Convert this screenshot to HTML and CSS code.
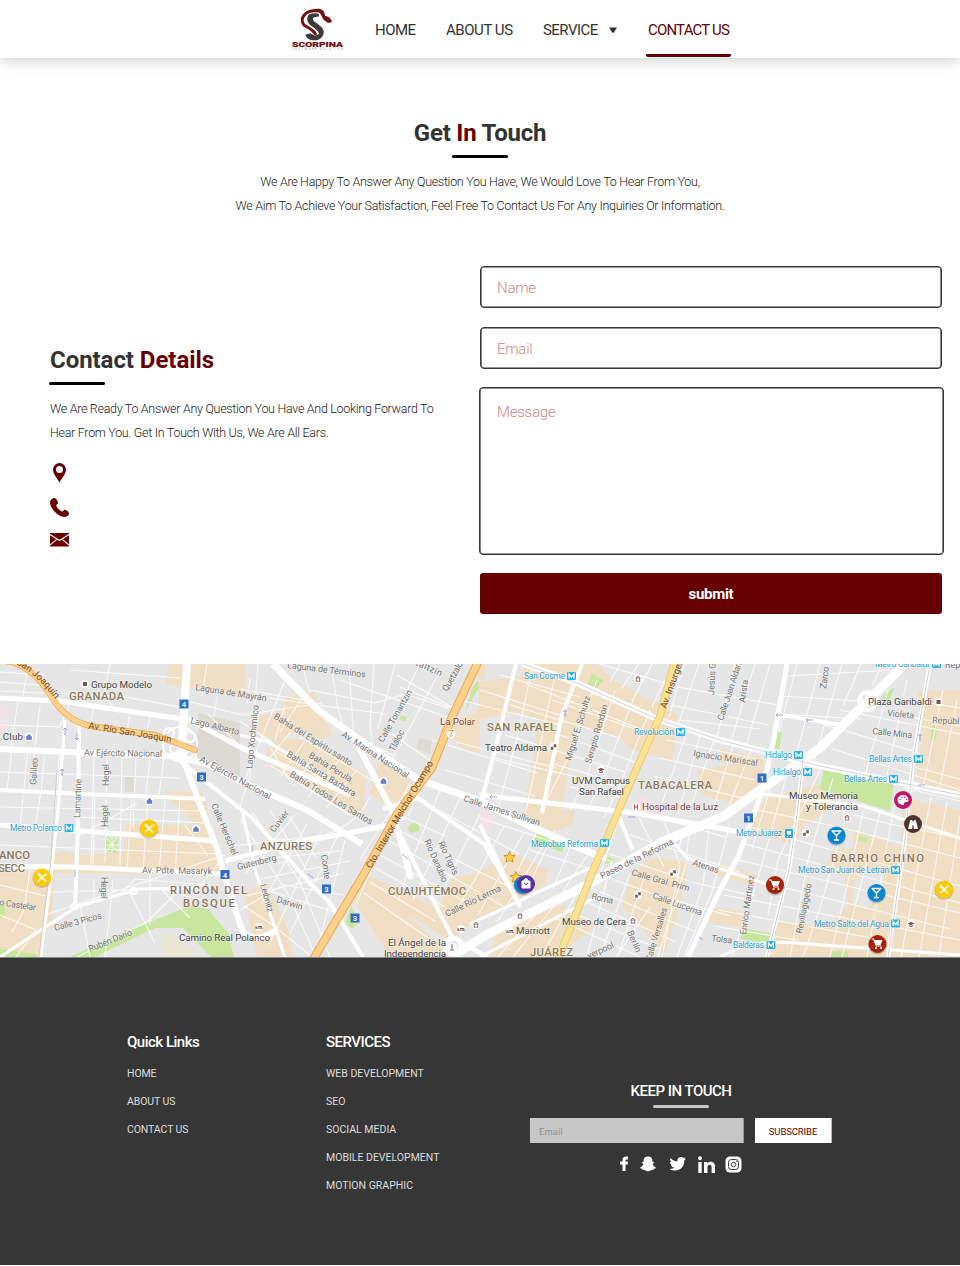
FILE: index.html
```html
<!DOCTYPE html>
<html lang="en">
<head>
<meta charset="utf-8">
<title>Scorpina - Contact Us</title>
<link rel="stylesheet" href="styles.css">
</head>
<body>
<header class="header">
  <svg class="logo" viewBox="0 0 54 44">
    <path d="M28 7C18 6 17 13 22 17c6 4 10 7 7 11-3 4-11 3-12-1" fill="none" stroke="#3b3b3b" stroke-width="5.500"/>
    <path d="M29 4.500C15 1 8 12 14 18c4 3 9 4 12 10" fill="none" stroke="#fff" stroke-width="5"/>
    <path d="M27 4C14 2 8 12 13 18c4 3 9 4 12 10" fill="none" stroke="#741012" stroke-width="3"/>
    <path d="M21 3c7-3 13-1 13 6 3 0 6 2 7 6l-4 1-4-3c-3-3-2-8-8-8z" fill="#741012"/>
    <text x="1" y="39.500" class="logo-name" textLength="51" lengthAdjust="spacingAndGlyphs">SCORPINA</text>
    <text x="1" y="43" class="logo-tag" textLength="51">SOFTWARE SOLUTION</text>
  </svg>
  <nav class="nav">
    <a class="nav-home">HOME</a>
    <a class="nav-about">ABOUT US</a>
    <a class="nav-service">SERVICE <svg class="caret" viewBox="0 0 8 6"><path d="M0 .4h8L5 5.3q-1 1-2 0z" fill="#333"/></svg></a>
    <a class="nav-contact">CONTACT US</a>
  </nav>
</header>

<main>
  <section class="intro">
    <h1 class="title">Get <span class="accent">In</span> Touch</h1>
    <div class="rule"></div>
    <p class="copy intro-one">We Are Happy To Answer Any Question You Have, We Would Love To Hear From You,</p>
    <p class="copy intro-two">We Aim To Achieve Your Satisfaction, Feel Free To Contact Us For Any Inquiries Or Information.</p>
  </section>

  <section class="contact">
    <div class="details">
      <h2 class="title">Contact <span class="accent">Details</span></h2>
      <div class="rule"></div>
      <p class="copy detail-one">We Are Ready To Answer Any Question You Have And Looking Forward To</p>
      <p class="copy detail-two">Hear From You. Get In Touch With Us, We Are All Ears.</p>
      <div class="detail-icons">
        <svg width="20" height="20" viewBox="0 0 20 20"><path fill-rule="evenodd" d="M9.5 0a6.5 6.5 0 0 0-6.5 6.5C3 11 7 15 9.4 19.5 12 15 16 11 16 6.5A6.5 6.5 0 0 0 9.500 0zm0 3a3.500 3.500 0 1 1 0 7 3.500 3.500 0 0 1 0-7z"/></svg>
        <svg width="20" height="20" viewBox="0 0 20 20"><path d="M4.500 0C6 0 8.500 4 8 5.200 7.500 6.500 6 6.500 6.300 7.500c.7 2.500 3.400 5 5.700 6 1 .4 1-1.500 2.600-1.800C16 11.500 19 14 19 15.500c0 1-1.500 3.500-4.200 3.500C8.500 19 0 10.500 0 4.500 0 1.500 3 0 4.500 0z"/></svg>
        <svg width="20" height="20" viewBox="0 3 20 20"><path d="M0 3h19v13.500H0z"/><path d="M0 4.500l7 4.500q2.500 2.400 5 0l7-4.500M0 15.200l6.500-5.500M19 15.200l-6.500-5.500" fill="none" stroke="#fff" stroke-width="1.100"/></svg>
      </div>
    </div>
    <form class="form">
      <input class="field" type="text" placeholder="Name">
      <input class="field" type="text" placeholder="Email">
      <textarea class="field message" placeholder="Message"></textarea>
      <button class="submit" type="button">submit</button>
    </form>
  </section>

  <svg class="map" viewBox="0 664 960 293">
    <defs>
      <g id="metro"><rect width="9" height="8" rx="1" fill="#27b0e6"/><path d="M2 6.500V2l2.500 3L7 2v4.500" fill="none" stroke="#fff" stroke-width="1.300"/></g>
      <g id="fork"><circle cy="1" r="9.500" fill="#000" opacity=".18"/><circle r="9" fill="#fccb05"/><path d="M-4 4L3-3M4 4L-3-3" stroke="#fff" stroke-width="1.500"/><path d="M-4.500-3.500l1.500-1 2 2.500-1 1zM2-2l2.500-2.500M3-1l2-2.500" stroke="#fff" stroke-width=".8" fill="#fff"/></g>
      <g id="glass"><circle cy="1" r="9.500" fill="#000" opacity=".18"/><circle r="9" fill="#0b86d0"/><path d="M-5-4.500H5M-4-4L0 0 4-4M0 0v4.500M-2.500 4.500h5" stroke="#fff" stroke-width="1.300" fill="none"/></g>
      <g id="cart"><circle cy="1" r="9.500" fill="#000" opacity=".18"/><circle r="9" fill="#a72208"/><path d="M-6-5h2l3 7h5" fill="none" stroke="#fff" stroke-width="1.200"/><path d="M-3.500-4h8.500L3 1h-5z" fill="#fff"/><circle cx="-1.500" cy="4" r="1.100" fill="#fff"/><circle cx="3.500" cy="4" r="1.100" fill="#fff"/></g>
      <g id="shop"><circle r="4" fill="#fff"/><path d="M-2.500-.5h5v3h-5zM-1.500-.5v-1q1.500-2 3 0v1" fill="#7078c8" stroke="#7078c8" stroke-width=".6"/></g>
      <g id="poi"><circle r="4.300" fill="#fff"/><path d="M-2.500-1h5M-2 2.200h4.200M-1.700-1v3M1.700-1v3M-2-1.500l2-1.200 2 1.200" stroke="#805752" stroke-width=".8" fill="none"/></g>
      <g id="grad"><circle r="4.300" fill="#fff"/><path d="M-3.500-.5L0-2.300 3.500-.5 0 1.300zM-2 1v1.300q2 1.200 4 0V1L0 2z" fill="#805752"/></g>
      <g id="bed"><circle r="4" fill="#fff"/><path d="M-3-1v3M-3 1h6v1M-1-.5h4v1" stroke="#805752" fill="none"/></g>
      <g id="mask"><circle r="4.300" fill="#fff"/><path d="M-2.500 0h2v2.500h-2zM.5-2.500h2V0h-2z" fill="#805752" stroke="#805752" stroke-width=".6"/></g>
      <g id="shield"><rect x="-4.500" y="-4.500" width="9" height="9" fill="#2e6ec9"/></g>
      <path id="star" d="M0-5.500l1.700 3.600 3.900.5-2.900 2.700.8 3.900L0 3.300l-3.500 1.900.8-3.900-2.900-2.700 3.900-.5z" fill="#ffcf40" stroke="#b98a25" stroke-width=".8"/>
      <path id="joaquin" d="M-5 659Q27 660 58 703"/>
    </defs>
    <rect y="664" width="960" height="293" fill="#e6e6e6"/>

    <!-- commercial blocks -->
    <g fill="#f1dfc5">
      <path d="M169 664h76v35l-42-12-15 2-22-5z"/><path d="M165 792h38l20 76 2 6-175-1V856l13-5 15 4 45-3 4-28 70 1-21-20z"/>
      <path d="M0 870l55 3-3 45-14 39H0z"/><path d="M286 697l27-5 9 25 11 18-15 6-20-12-22 12-19-10 3-15 22-6z"/>
      <path d="M266 755l8-18 32 3 60 34-3 43-25-11-71-42z"/><path d="M378 761l16 6 17 8-5 14 9 13-11 14-34-22z"/>
      <path d="M525 664h72l16 16 65 34-6 47-42-12-10-12-45-11-13 84h-38l15-90-20-8-40 8V682l43-6z"/>
      <path d="M452 735l3-14 25-12v44l-18-3zM477 664h8v15h-8z"/><path d="M697 770l48-7 20 5-3 31-30 4-30-8z"/>
      <path d="M720 749l44 9-2 10-42-6zM917 690h43v104l-45-13 7-45z"/><path d="M765 798l60-15 8 25-27 16-13 20-44-12z"/>
      <path d="M903 798l57 12v147H769l9-36 50 6 20-22-3-27-19-13 16-39 59 21z"/>
      <path d="M480 872l33-20 35 18-2 14-29 17-37 16-30 24-40-25-30 10-18-19-10-20 11-14 75 35 15-30z"/>
      <path d="M352 899l50 10 50 48h-62zM244 893l22-10 22 47 5 27h-36z"/><path d="M500 923l52-22 45 24-40 32h-68z"/>
      <path d="M632 872l18-15 38 5-9 48-16 47-17-25-24-25z"/><path d="M705 907l37 4 4 17-36-5zM526 810h48v14l-20 8-28-13zM720 864l40 12-3 11-41-12z"/>
    </g>
    <path d="M854 882l13-12 18 4-4 22-14 12-14-4zM832 826l20 4 2 18-26 2z" fill="#e6e6e6"/>
    <path d="M0 705h8v29H0zM480 807l16 12-4 11-12-4zM635 801l8-5 9 4-4 13-12-2z" fill="#f5e1e6"/>
    <path d="M197 713l43 10v62l-20-14-28-17 8-30zM125 777h9v15h-9zM419 738l13 3-2 13-14-6z" fill="#dcdad3"/>
    <path d="M175 936q-16-9-12 21h38z" fill="#ece6d7"/>

    <!-- parks -->
    <g fill="#c8e69e">
      <path d="M824 767l70 14-4 30-70-22zM774 730l8 3-3 17-9-3zM885 693l9-5-5 13h-8zM932 725l5 2-2 14-4-1z"/>
      <path d="M70 957l50-23 70-28 18 3 20 24 6 24h-23l-28-29h-28L95 957zM106 837l12 1-1 15-12-1zM0 905h5v11l-5 2zM0 949l37 5v3H0z"/>
      <path d="M538 829l28 12-4 11-28-10zM602 854l14 6-10 4-6-4zM592 674l12 6-7 8-9-4zM401 715l6 2-1 4-7-1zM478 680l1 8-14 23 8-25zM408 828q6-9 11-2v5l-9 2zM351 906l7 16-5 7-8-5z"/>
      <path d="M745 928l26 6-3 9-28-4zM831 951h17v6h-17zM859 836l9 2-1 4-9-2z"/>
    </g>

    <!-- side streets -->
    <g class="side">
      <path d="M0 672l45 3M0 682l52 4M0 691l120 5 65 12M70 670l110 8M110 664l-6 31 12 16M28 664l-5 32M18 700l-7 48M40 705l-5 43-6 43M0 725l60 2M70 704l-10 22M94 706l-4 20M130 714l-3 17M150 717l-3 15"/>
      <path d="M12 750l-5 40M28 750l-4 38-4 39M45 751l-4 40-6 37M60 751l-7 75M94 755l-3 109M107 755l-2 108M122 755l-2 110M136 756l-3 72M150 757l-4 37M164 757l-5 38M0 772l180 6M0 807l206 4M78 817l130 6M0 845l220 9M95 798l-2 67M132 797l-5 72M148 797l-5 75M165 798l-6 75M180 798l-5 76M137 803l-60 34"/>
      <path d="M207 664l-5 32M218 690l-4 27M187 701l55 14 80-12M240 689l75 13M208 714l35 35M258 664l-8 112-11 34M250 678l-3 25M286 678l-43 106M268 743l22 38M240 721l50 34 40 32M270 698l46 7 40 5 30 4M302 664l8 30M331 664l7 45 9 30M349 664l5 78M374 664l-4 60 4 35M395 664l-17 65M420 664l-35 71M440 671l-40 75-12 19M310 690l65 13 30-9 43 14M340 680l110 38M386 730l48 33M397 675l60 35M400 687l52 21M370 744l25 12"/>
      <path d="M290 733l-23 28M306 739l-25 37M322 748l-29 38M340 759l-32 38M357 770l-31 38M275 751l85 49M270 765l80 50M300 737l73 44M285 705l-10 35M302 698l-22 34"/>
      <path d="M390 812l-30 47M410 784l-17 28 52 24M420 788l-12 28M440 790l-30 75-12 36M460 798l-47 102M480 814l-35 72M504 826l-30 55-18 29M523 834l-45 81M543 845l-45 76M405 792l50 27 64 35M394 828l125 64M388 840l115 66M380 855l90 49M375 868l70 39M370 882l65 39M364 893l64 45M432 740l105 33M445 770l90 26M480 690l80 25M460 700l100 25M456 742l100 26M500 675l80 22M526 684l125 49M510 705l110 33M505 735l120 37M495 758l120 28"/>
      <path d="M597 680l-25 70-30 60M615 690l-28 87-17 33M633 700l-32 84-15 28M650 710l-28 70-18 38M533 664l-15 70-20 74M556 671l-30 139M552 700l100 35M560 735l80 29M550 763l77 22M570 787l50 10M480 818l70 23 60 20M540 826l-25 50M555 830l-25 53M573 840l-20 49M591 850l-28 41M530 850l67 21"/>
      <path d="M600 664l75 22M620 664l-10 18M639 664l-18 25M652 664l-20 37M665 680l-13 27M684 664l-15 53M699 664l-23 67M735 664l-20 81M755 664l-25 80M770 664l-24 82M678 687l100 18M671 705l98 20M681 720l80 9M667 740l90 19M660 758l95 22M653 776l97 24M687 732l-27 77M700 735l-22 80M714 740l-24 69M733 745l-22 71M751 750l-25 64"/>
      <path d="M785 676l110-6M782 696l91 6M781 714l80 5M797 664l-18 68M820 664l-25 97M842 664l-28 97M861 664l-18 42M882 664l-10 22M888 690l-23 86M907 680l-20 95M825 725l95 28M840 710l120 24M830 748l130 42M912 700l48 8M905 716l55 10M943 690l-20 98M957 700l-18 91M903 764l57 15"/>
      <path d="M771 785l-19 64M786 778l-28 100-26 79M820 770l-42 90-10 56M833 778l-25 82-18 97M848 810l-27 95-18 52M863 812l-15 70-18 75M880 813l-22 82-16 62M894 806l-27 151M931 797l-30 160M947 802l-28 155M960 816l-21 141M758 810l85 18 117 30M750 827l210 59M742 843l218 60M735 859l225 54M730 874l220 55M724 895l236 45M718 910l165 30M713 926l85 14M904 788l56 13M770 793l120 31 70 14"/>
      <path d="M619 818l-21 62M636 812l28 55M660 810l20 55-18 92M690 820l-4 44-28 93M710 820l-7 66-26 71M730 823l-18 69-28 65M610 854l85 29 60 13M601 875l55 20 75 21M591 888l105 44M580 899l96 43M565 910l95 39M555 918l85 39M612 860l-25 97M630 873l-30 84M646 872l-28 84M650 907l-34 50M581 886l-40 71M562 896l-49 61M542 907l-44 50M650 815l75 22M630 835l110 37"/>
      <path d="M45 915l180-60M0 915l36 15-20 27M50 892l110-3 60 16M76 906l42-10 17-17 75 6M80 905l10 52M94 880v20M113 880l-8 77M130 893l25 50M160 888l30 30M30 870l-6 40-12 22M0 885l50 12M150 875v50M185 884l-38 38-70 35M225 855l-35 44M185 825l23 31"/>
      <path d="M240 819l48 75 28 63M252 812l48 70 30 75M270 810l36 59M289 816l27 42M232 846l95-11M241 861l100-10M260 879l90-18M245 896l100-23M244 906l30 20 38 31M338 835l-48 98M322 830l-53 115M307 824l-45 79M295 815l-50 59M273 892l67 22M345 840l-25 100M240 910l43-25 60 10M372 868l-16 36"/>
      <path d="M286 840a18 12 0 1 0 4 20M370 797a70 65 0 0 1-60 40M210 730c15 10 22 16 30 18M107 838l10 13M117 838l-11 14M112 837v16M106 845h12"/>
    </g>

    <!-- avenues -->
    <g class="road">
      <path d="M187 664l-6 94" stroke-width="8"/><path d="M0 698l60 3 53 8 77 11 50 27 110 48" stroke-width="5"/>
      <path d="M0 749l90 4 84 3 34 8 32 17 67 29 55 34" stroke-width="6"/><path d="M0 790l84 4 121 5" stroke-width="4"/>
      <path d="M180 750l20 55 15 38 15 50 12 37q8 15 35 0" stroke-width="6"/><path d="M0 866l75 1 147 7M225 861l70-18 95-18 14-8" stroke-width="5"/>
      <path d="M0 825l70 5 145 11" stroke-width="5"/><path d="M79 726l-1 100-3 80" stroke-width="4"/><path d="M65 720l-6 80-7 66-11 91" stroke-width="3"/>
      <path d="M273 664l45 46 35 25 64 44 63 22 56 28 70 30" stroke-width="7"/><path d="M354 738l38 72 19 69" stroke-width="6"/>
      <path d="M395 825l57 112 35 20M383 809l35-11 66 46 36 61" stroke-width="4"/><path d="M180 761l72 57 58 65 20 20 33 54" stroke-width="4"/>
      <path d="M240 735l28 7 80 48M0 957l76-50 63-18 57-1M242 810l13 60 30 87" stroke-width="3"/>
      <path d="M523 664l54 19 80 36 63 21 100 26 140 29" stroke-width="6"/>
      <path d="M455 954l33-20 99-49 77-44 60-25 39-28 57-40 91-90" stroke-width="9"/><path d="M470 924l120-56M480 957l120-62" stroke-width="3"/>
      <path d="M516 664l-22 90-14 52M582 664l-20 51-20 98" stroke-width="4"/><path d="M787 664l-14 80-12 51-23 62-18 33-32 67M480 795l155 18 110 20" stroke-width="5"/>
      <path d="M803 760l-6 55-8 55-22 87M930 664l-17 96-8 80-17 117M775 714l66 11" stroke-width="4"/>
      <path d="M720 957q30-18 75-14l165 12M763 794l100 12 97 32M675 844l12 14 80 26" stroke-width="3"/>
      <path d="M480 825l40 82M618 815l15 35" stroke-width="4"/>
      <circle cx="180" cy="744" r="17"/><circle cx="169" cy="733" r="5"/><circle cx="190" cy="737" r="5"/><circle cx="174" cy="749" r="4"/><circle cx="191" cy="755" r="5"/>
      <circle cx="868" cy="701" r="9" stroke-width="4"/><circle cx="676" cy="841" r="5"/><circle cx="453" cy="946" r="8" fill="#e6e6e6" stroke-width="5"/><circle cx="75" cy="906" r="3"/><circle cx="134" cy="891" r="3"/>
    </g>
    <path d="M523 664l54 19 80 36 63 21 100 26 140 29M803 760l-6 55-8 55-22 87M930 664l-17 96-8 80-17 117M57 770l-6 90-12 97" fill="none" stroke="#c6c7ca" stroke-width=".8"/>
    <path d="M65 735v-7M63 730l2-2 2 2M77 733v7M75 738l2 2 2-2M62 776v-7M60 771l2-2 2 2M75 870v7M565 717v-7M563 712l2-2 2 2M490 797h7M492 795l-2 2 2 2M776 715h7M778 713l-2 2 2 2M806 720h7M808 718l-2 2 2 2M920 741v-7M918 736l2-2 2 2M918 785h7M628 817h7M699 937l4 3M402 854l6 5M308 874l5 4M252 852v-6" fill="none" stroke="#8b92ce" stroke-width=".8"/>

    <g fill="none" stroke-linecap="round"><path d="M-4 661Q27 658 51 696 65 720 90 726L155 735 195 750" stroke="#eaa94e" stroke-width="6"/><path d="M-4 661Q27 658 51 696 65 720 90 726L155 735 195 750" stroke="#fdd18a" stroke-width="4.500"/>
      <path d="M479 660l-27 57-20 51-35 46-33 60-53 89" stroke="#eaa94e" stroke-width="8.500"/><path d="M479 660l-27 57-20 51-35 46-33 60-53 89" stroke="#fdd18a" stroke-width="6.500"/>
      <path d="M675 660l-15 56-28 63-37 87-39 98" stroke="#e6c665" stroke-width="7.500"/><path d="M675 660l-15 56-28 63-37 87-39 98" stroke="#fbe192" stroke-width="6"/></g>

    <g class="street">
      <text transform="translate(195 690) rotate(9)" textLength="72">Laguna de Mayrán</text>
      <text transform="translate(190 723) rotate(14)" textLength="50">Lago Alberto</text>
      <text transform="translate(84 755.500) rotate(1)" textLength="78">Av Ejército Nacional</text>
      <text transform="translate(199 761) rotate(29)" textLength="80">Av Ejército Nacional</text>
      <text transform="translate(36 785) rotate(-86)" textLength="27">Galileo</text>
      <text transform="translate(109 786) rotate(-90)" textLength="22">Hegel</text>
      <text transform="translate(108 827) rotate(-90)" textLength="22">Hegel</text>
      <text transform="translate(101 877) rotate(90)" textLength="22">Hegel</text>
      <text transform="translate(80 818) rotate(-88)" textLength="39">Lamartine</text>
      <text transform="translate(252 769) rotate(-84)" textLength="64">Lago Xochimilco</text>
      <text transform="translate(287 668) rotate(7)" textLength="79">Laguna de Términos</text>
      <text transform="translate(273 718) rotate(32)" textLength="91">Bahía del Espíritu santo</text>
      <text transform="translate(308 757) rotate(31)" textLength="49">Bahía Perula</text>
      <text transform="translate(286 756) rotate(31)" textLength="79">Bahía Santa Barbara</text>
      <text transform="translate(289 776) rotate(31)" textLength="95">Bahía Todos Los Santos</text>
      <text transform="translate(341 736) rotate(33)" textLength="78">Av. Marina Nacional</text>
      <text transform="translate(383 743) rotate(-60)" textLength="59">Calle Tonantzin</text>
      <text transform="translate(394 752) rotate(-62)" textLength="23">Tlaloc</text>
      <text transform="translate(415 665) rotate(24)" textLength="28">taltzin</text>
      <text transform="translate(447 692) rotate(-60)" textLength="46">Quetzalcóatl</text>
      <text transform="translate(274 833) rotate(-52)" textLength="25">Cuvier</text>
      <text transform="translate(238 870) rotate(-14)" textLength="40">Gutenberg</text>
      <text transform="translate(321 855) rotate(82)" textLength="25">Comte</text>
      <text transform="translate(260 885) rotate(74)" textLength="29">Leibnitz</text>
      <text transform="translate(276 902) rotate(17)" textLength="27">Darwin</text>
      <text transform="translate(211 805) rotate(67)" textLength="55">Calle Herschel</text>
      <text transform="translate(438 843) rotate(65)" textLength="36">Río Tigris</text>
      <text transform="translate(424 841) rotate(66)" textLength="46">Río Danubio</text>
      <text transform="translate(447 917) rotate(-26)" textLength="61">Calle Río Lerma</text>
      <text transform="translate(142 873) rotate(1)" textLength="70">Av. Pdte. Masaryk</text>
      <text transform="translate(-1 905) rotate(9)" textLength="37">o Castelar</text>
      <text transform="translate(55 931) rotate(-15)" textLength="49">Calle 3 Picos</text>
      <text transform="translate(90 952) rotate(-22)" textLength="46">Rubén Darío</text>
      <text transform="translate(571 761) rotate(-73)" textLength="67">Miguel E. Schultz</text>
      <text transform="translate(591 764) rotate(-74)" textLength="61">Serapio Rendon</text>
      <text transform="translate(714 695) rotate(-87)" textLength="40">Jesús Gar</text>
      <text transform="translate(693 756) rotate(9)" textLength="65">Ignacio Mariscal</text>
      <text transform="translate(723 721) rotate(-72)" textLength="68">Calle Juan Aldama</text>
      <text transform="translate(745 703) rotate(-82)" textLength="23">Arista</text>
      <text transform="translate(826 689) rotate(-82)" textLength="22">Zarco</text>
      <text transform="translate(887 716) rotate(5)" textLength="27">Violeta</text>
      <text transform="translate(932 723) rotate(3)" textLength="39">República</text>
      <text transform="translate(872 734) rotate(6)" textLength="40">Calle Mina</text>
      <text x="945" y="668">Repú</text>
      <text transform="translate(463 801) rotate(18)" textLength="80">Calle James Sullivan</text>
      <text transform="translate(602 879) rotate(-26)" textLength="80">Paseo de la Reforma</text>
      <text transform="translate(692 865) rotate(18)" textLength="27">Atenas</text>
      <text transform="translate(631 875) rotate(16)" textLength="60">Calle Gral. Prim</text>
      <text transform="translate(652 898) rotate(20)" textLength="52">Calle Lucerna</text>
      <text transform="translate(591 899) rotate(13)" textLength="22">Roma</text>
      <text transform="translate(627 932) rotate(67)" textLength="23">Berlín</text>
      <text transform="translate(651 962) rotate(-73)" textLength="56">Calle Versalles</text>
      <text transform="translate(589 959) rotate(-25)" textLength="28">verpool</text>
      <text transform="translate(711 941) rotate(7)" textLength="21">Tolsa</text>
      <text transform="translate(746 935) rotate(-82)" textLength="60">Enrico Martínez</text>
      <text transform="translate(802 934) rotate(-79)" textLength="51">Revillagigedo</text>
    </g>
    <g class="main-label">
      <text><textPath href="#joaquin" startOffset="5" textLength="70">Río San Joaquín</textPath></text>
      <text transform="translate(88 728.500) rotate(9.500)" textLength="84">Av. Río San Joaquín</text>
      <text transform="translate(371 869) rotate(-59.500)" textLength="123">Cto. Interior Melchor Ocampo</text>
      <text transform="translate(666 709) rotate(-70)" textLength="65">Av. Insurgentes</text>
    </g>
    <g class="area">
      <text x="69" y="700" textLength="55">GRANADA</text><text x="260" y="850" textLength="52">ANZURES</text><text x="388" y="895" textLength="78">CUAUHTÉMOC</text>
      <text x="487" y="731" textLength="69">SAN RAFAEL</text><text x="638" y="788.500" textLength="74">TABACALERA</text><text x="530" y="956" textLength="43">JUÁREZ</text>
    </g>
    <g class="area brown">
      <text x="170" y="894" textLength="77">RINCÓN DEL</text><text x="183" y="907" textLength="52">BOSQUE</text><text x="-1" y="859" textLength="31">ANCO</text><text x="-2" y="871.500" textLength="27">SECC</text><text x="831" y="862" textLength="93">BARRIO CHINO</text>
    </g>
    <g class="place">
      <text x="91" y="687.500" textLength="61">Grupo Modelo</text><text x="-5" y="740" textLength="28">s Club</text><text x="179" y="941" textLength="91">Camino Real Polanco</text>
      <text x="388" y="945.500" textLength="58">El Ángel de la</text><text x="384" y="956.500" textLength="62">Independencia</text><text x="485" y="750.500" textLength="62">Teatro Aldama</text>
      <text x="572" y="783.500" textLength="58">UVM Campus</text><text x="579" y="794.500" textLength="45">San Rafael</text><text x="868" y="705" textLength="64">Plaza Garibaldi</text>
      <text x="789" y="799" textLength="69">Museo Memoria</text><text x="806" y="810" textLength="52">y Tolerancia</text><text x="562" y="924.500" textLength="64">Museo de Cera</text><text x="516" y="934" textLength="34">Marriott</text>
      <g fill="#7e3e3a"><text x="440" y="725" textLength="35">La Polar</text><text x="642" y="810" textLength="76">Hospital de la Luz</text></g>
    </g>
    <g class="transit">
      <text x="10" y="831" textLength="52">Metro Polanco</text><text x="524" y="679" textLength="41">San Cosme</text><text x="634" y="734.500" textLength="40">Revolución</text><text x="765" y="758" textLength="27">Hidalgo</text><text x="773" y="775" textLength="28">Hidalgo</text>
      <text x="869" y="762" textLength="43">Bellas Artes</text><text x="844" y="782" textLength="43">Bellas Artes</text><text x="875" y="667" textLength="54">Metro Garibaldi</text><text x="531" y="846.500" textLength="67">Metrobus Reforma</text><text x="736" y="836" textLength="46">Metro Juárez</text>
      <text x="798" y="873" textLength="91">Metro San Juan de Letrán</text><text x="814" y="926.500" textLength="75">Metro Salto del Agua</text><text x="733" y="947.500" textLength="31">Balderas</text>
    </g>
    <use href="#metro" x="64.500" y="824"/><use href="#metro" x="567" y="672"/><use href="#metro" x="676" y="728"/><use href="#metro" x="794" y="751"/><use href="#metro" x="803" y="768"/><use href="#metro" x="914" y="755"/><use href="#metro" x="889" y="775"/><use href="#metro" x="932" y="660"/><use href="#metro" x="600" y="839"/><use href="#metro" x="891" y="866"/><use href="#metro" x="891" y="919.500"/><use href="#metro" x="766.500" y="941"/>
    <rect x="785" y="829" width="8" height="9" rx="1" fill="#27b0e6"/><rect x="787" y="831" width="4" height="3.500" fill="#fff"/><path d="M787 836.500h1M790 836.500h1" stroke="#fff" fill="none"/>
    <g class="shield-no"><use href="#shield" x="184" y="704"/><text x="184" y="707">4</text><use href="#shield" x="201.500" y="777"/><text x="201.500" y="780">3</text><use href="#shield" x="225" y="874.500"/><text x="225" y="877.500">4</text><use href="#shield" x="326.500" y="889"/><text x="326.500" y="892">3</text><use href="#shield" x="355" y="918"/><text x="355" y="921">3</text><use href="#shield" x="762" y="778"/><text x="762" y="781">1</text><use href="#shield" x="748.500" y="818"/><text x="748.500" y="821">1</text></g>
    <use href="#shop" x="29" y="737"/><use href="#shop" x="149.500" y="801"/><use href="#shop" x="196" y="829"/><use href="#shop" x="383.500" y="781"/>
    <use href="#poi" x="638" y="679"/><use href="#grad" x="601" y="770"/><use href="#poi" x="847" y="818"/><use href="#poi" x="633" y="921"/><use href="#grad" x="911" y="924"/><use href="#poi" x="476" y="925"/><use href="#poi" x="520" y="916"/>
    <use href="#bed" x="259" y="927"/><use href="#bed" x="461" y="929"/><use href="#bed" x="510" y="931"/><use href="#mask" x="553.500" y="747"/><use href="#mask" x="673" y="873"/><use href="#mask" x="638" y="895"/><use href="#mask" x="806" y="833"/>
    <g><circle cx="85" cy="684" r="4" fill="#fff"/><path d="M83 682h4v4h-4z" fill="#80524d"/><circle cx="938.500" cy="702" r="4" fill="#fff"/><path d="M936.500 700h4v4h-4z" fill="#80524d"/><circle cx="451" cy="733.500" r="4.500" fill="#fff"/><path d="M448.500 730.500h5l-2.500 2.500v3M449.500 736h3" fill="none" stroke="#e99735"/><circle cx="636" cy="807" r="4" fill="#fff"/><path d="M634.500 804.500v5M637.500 804.500v5M634.500 807h3" stroke="#d6453c" fill="none"/><circle cx="452" cy="947.500" r="5" fill="#fff"/><path d="M452 944v5M450 950h4" stroke="#805752" fill="none"/></g>
    <use href="#star" x="509.500" y="857"/><use href="#star" x="516" y="877"/>
    <use href="#fork" x="149" y="828.500"/><use href="#fork" x="42" y="877.500"/><use href="#fork" x="944" y="889.500"/><use href="#glass" x="836.500" y="835.500"/><use href="#glass" x="876.500" y="893"/><use href="#glass" x="523" y="885"/><use href="#cart" x="775" y="885"/><use href="#cart" x="877.500" y="944"/>
    <circle cx="526" cy="884" r="9" fill="#5632a5"/><path d="M522 881h8v7h-8zM524 882v-2q2-3 4 0v2" fill="#fff" stroke="#fff"/><path d="M524 883q2 3 4 0" fill="none" stroke="#5632a5"/>
    <circle cx="903" cy="800" r="9" fill="#c2176a"/><path d="M897.500 800a5.500 5 0 0 1 11 0c0 3-3 1.500-4 2.500s.5 2.500-1.500 2.500a5.500 5 0 0 1-5.500-5z" fill="#fff"/><path d="M899.500 799.500h1.200M901.500 797.300h1.200M904 797.300h1.200M906 799.500h1.200" stroke="#c2176a" stroke-width="1.200"/>
    <circle cx="913" cy="824" r="9" fill="#4b342e"/><path d="M908.500 828.500l2-8h1.500l1 2.500 1-2.500h1.500l2 8h-3.500v-3.500h-2v3.500z" fill="#fff" stroke="#fff" stroke-width=".7"/>
  </svg>
</main>

<footer class="footer">
  <div class="col quick">
    <h3>Quick Links</h3>
    <a>HOME</a><a>ABOUT US</a><a>CONTACT US</a>
  </div>
  <div class="col services">
    <h3>SERVICES</h3>
    <a>WEB DEVELOPMENT</a><a>SEO</a><a>SOCIAL MEDIA</a><a>MOBILE DEVELOPMENT</a><a>MOTION GRAPHIC</a>
  </div>
  <div class="keep">
    <h3>KEEP IN TOUCH</h3>
    <div class="keep-rule"></div>
    <form class="subscribe"><input type="text" placeholder="Email"><button type="button">SUBSCRIBE</button></form>
    <div class="social">
      <svg width="8" height="16" viewBox="0 0 8 16"><path d="M8 .5v3H6.500C5.500 3.500 5.500 4 5.500 5.500H8l-.3 3H5.500V15h-3V8.500H0v-3h2.500V4C2.500 1.500 4 .5 6 .5z"/></svg>
      <svg width="16" height="16" viewBox="0 0 16 16"><path d="M8 .5c3.200 0 4.700 2 4.500 5.500l1.300 0c.8.700-.2 1.300-1.200 1.700.5 2 1.500 3 3.300 3.700.2 1-1 1.300-2.300 1.500l-.3 1c-2-.3-3 1.300-5.300 1.300S4.700 13.600 2.700 13.900l-.3-1C1.100 12.700 0 12.400.1 11.400 2 10.700 3 9.700 3.400 7.700c-1-.4-2-1-1.200-1.700h1.300C3.300 2.500 4.800.5 8 .5z"/></svg>
      <svg width="17" height="16" viewBox="0 0 17 16"><path d="M.5 13c2 .1 3.500-.3 4.800-1.400-1.500 0-2.800-1-3.200-2.300h1.400C2 8.800 1 7.500 1 5.900l1.500.4C1 5 .8 3.300 1.600 1.900 3.400 4 5.800 5.200 8.500 5.400 8 3.200 9.700 1 12 1c1 0 1.800.4 2.500 1l2.100-.7-1.400 1.800 1.800-.4-1.700 1.700c.2 5-3.300 10.100-9.300 10.100-2 0-3.900-.5-5.500-1.500z"/></svg>
      <svg width="17" height="17" viewBox="0 0 17 17"><path d="M.3 6h3.400v11H.3zM6 6h3.300v1.500C10 6.300 11.200 5.700 12.700 5.700 16 5.700 17 8 17 10.800V17h-3.400v-5.500c0-1.700-.5-2.700-1.900-2.700-1.500 0-2.200 1-2.200 2.800V17H6z"/><circle cx="2" cy="2.200" r="2"/></svg>
      <svg width="17" height="17" viewBox="0 0 17 17"><rect x=".5" y=".5" width="16" height="16" rx="4.500"/><rect x="3.500" y="3.500" width="10" height="10" rx="3" fill="none" stroke="#363636"/><circle cx="8.500" cy="8.500" r="2.200" fill="none" stroke="#363636"/><circle cx="11.600" cy="5.500" r=".6" fill="#363636"/></svg>
    </div>
  </div>
</footer>
</body>
</html>
```
FILE: styles.css
```css
* { box-sizing: border-box; }
body { margin: 0; width: 960px; background: #fff; color: #333; font-family: Roboto, "Open Sans", sans-serif; }
h1, h2, h3, p { margin: 0; }
input, textarea, button { font-family: inherit; margin: 0; outline: none; resize: none; }

.header { position: relative; display: flex; height: 58px; padding-left: 291px; background: #fff; box-shadow: 0 0 15px rgba(0, 0, 0, .25); }
.logo { width: 54px; height: 44px; margin-top: 7px; flex: none; }
.logo-name { font: 900 8px Roboto, sans-serif; fill: #741012; stroke: #741012; stroke-width: .2; }
.logo-tag { font: 3px Roboto, sans-serif; fill: #999; }
.nav { display: flex; margin-left: 30px; font-size: 15px; line-height: 60px; white-space: nowrap; }
.nav a { height: 57px; }
.nav-home { width: 71px; letter-spacing: -.55px; }
.nav-about { width: 97px; letter-spacing: -.45px; }
.nav-service { width: 103px; letter-spacing: -.55px; }
.nav-contact { width: 85px; padding-left: 2px; color: #600; border-bottom: 3px solid #600; border-radius: 2px; letter-spacing: -.82px; }
.caret { width: 8px; height: 6px; margin-left: 8px; vertical-align: 2.5px; }

.intro { display: flex; flex-direction: column; align-items: center; height: 208px; padding-top: 58px; }
.title { font-size: 24px; line-height: 34px; font-weight: 700; letter-spacing: -.22px; white-space: nowrap; }
.accent { color: #600; }
.rule { width: 56px; height: 3px; margin: 5px 0 12px; background: #000; border-radius: 2px; }
.copy { font-size: 12.5px; font-weight: 300; line-height: 24px; white-space: nowrap; color: #222; letter-spacing: -.3px; }

.contact { display: grid; grid-template-columns: 430px 464px; padding-left: 50px; height: 398px; }
.details { padding-top: 77px; }
.details .title { letter-spacing: -.05px; }
.details .rule { margin: 5px 0 12px -1px; }
.detail-icons { display: flex; flex-direction: column; gap: 15px; margin-top: 18px; fill: #600; }
.detail-icons svg { display: block; }
.form { display: flex; flex-direction: column; }
.field { width: 462px; height: 42px; margin-bottom: 19px; padding: 2px 16px 0; border: 1px solid #363636; box-shadow: inset 0 0 0 .6px #363636; border-radius: 4px; background: #fff; font-size: 15px; font-weight: 300; letter-spacing: -.25px; }
.field::placeholder { color: #c78989; opacity: 1; }
.message { width: 465px; height: 168px; margin: -1px 0 18px -1px; padding: 15px 17px; }
.submit { width: 462px; height: 41px; border: 0; border-radius: 3px; background: #600; color: #fff; font-size: 15px; font-weight: 700; letter-spacing: -.3px; }

.map { display: block; width: 960px; height: 293px; }
.map text { font-family: Roboto, sans-serif; paint-order: stroke; stroke: #fff; stroke-width: 1.2px; stroke-opacity: .5; stroke-linejoin: round; }
.side { fill: none; stroke: #fff; stroke-width: 1.1; stroke-opacity: .8; }
.road { fill: none; stroke: #fff; stroke-width: 2; stroke-linejoin: round; }
.street text { font-size: 9px; fill: #747474; }
.main-label text { font-size: 9.5px; fill: #79502c; stroke: none; }
.area text { font-size: 11.3px; font-weight: 500; fill: #8a7c5d; }
.brown text { fill: #8c745d; }
.place { fill: #444; }
.place text { font-size: 9.8px; }
.transit text { font-size: 8.6px; fill: #2ba2d6; }
.shield-no text { font-size: 7px; font-weight: 700; fill: #fff; stroke: none; text-anchor: middle; }

.footer { display: grid; grid-template-columns: 199px 204px 302px; height: 308px; padding: 74px 0 0 127px; background: #363636; border-top: 1px solid #858585; color: #ddd; }
.footer h3 { font-size: 15px; line-height: 20px; font-weight: 500; color: #fff; white-space: nowrap; letter-spacing: -.5px; }
.col { display: flex; flex-direction: column; }
.col h3 { margin-bottom: 8px; }
.col a { font-size: 10.5px; line-height: 28px; letter-spacing: -.1px; white-space: nowrap; }
.services a { letter-spacing: 0; }
.keep { display: flex; flex-direction: column; align-items: center; padding-top: 49px; }
.keep-rule { width: 56px; height: 3px; margin: 4px 0 10px; background: #c6c6c6; border-radius: 2px; }
.subscribe { display: flex; gap: 11px; width: 302px; }
.subscribe input { width: 214px; height: 25px; padding: 2px 9px 0; border: 0; border-right: 1px solid #999; background: #c6c6c6; font-size: 9.5px; }
.subscribe input::placeholder { color: #929292; opacity: 1; }
.subscribe button { width: 77px; height: 25px; padding: 2px 0 0; border: 0; border-right: 1px solid #bbb; background: #fff; color: #600; font-size: 9.5px; letter-spacing: -.1px; }
.social { display: grid; grid-template-columns: 20px 29px 29px 27px 17px; margin-top: 13px; fill: #fff; }
```
